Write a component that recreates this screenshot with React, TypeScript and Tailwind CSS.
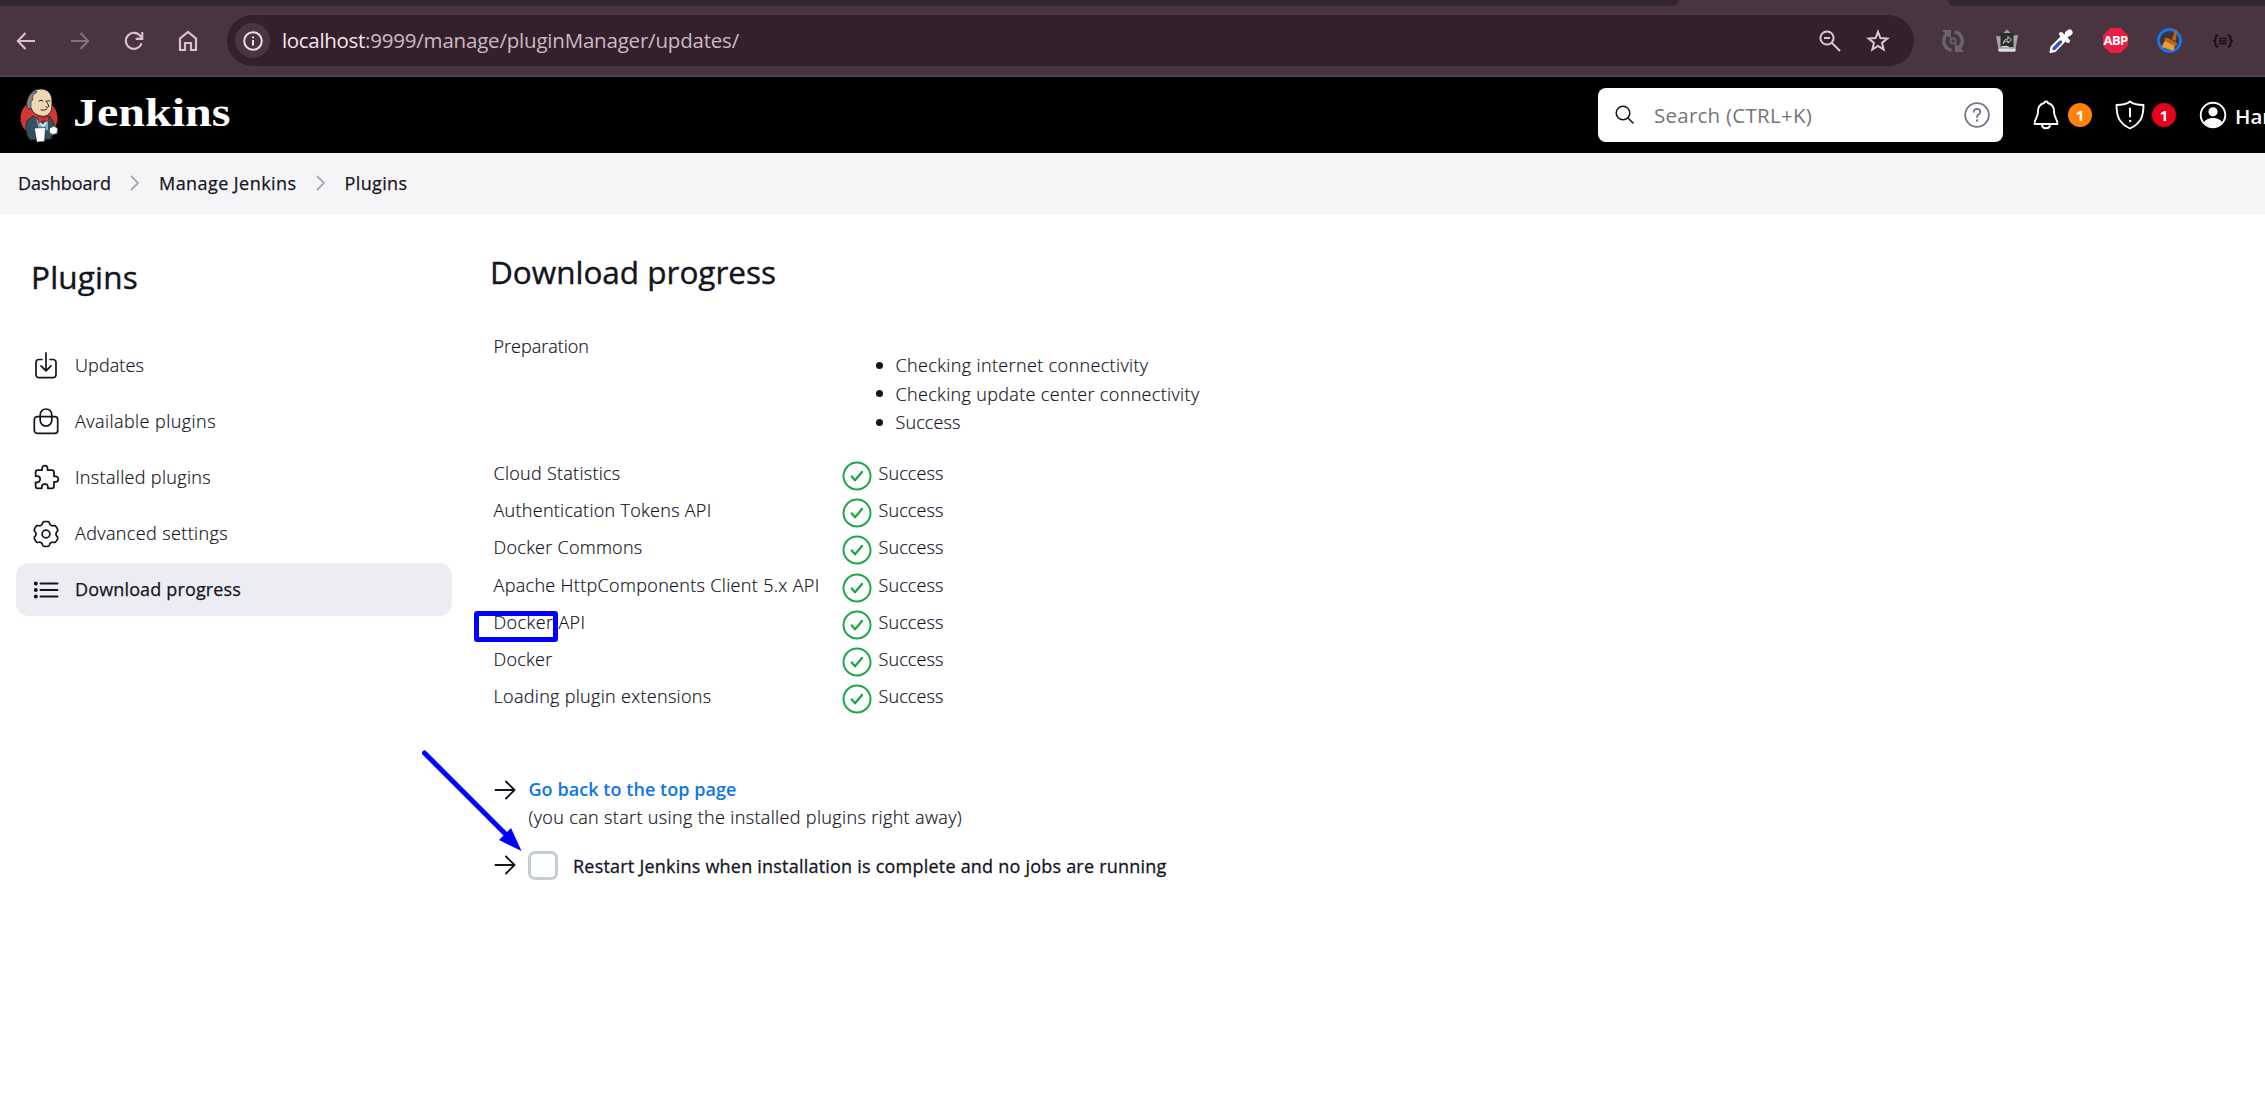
import { useLayoutEffect, useRef, useState, type ReactNode } from "react";
import { IoExtensionPuzzleOutline } from "react-icons/io5";

/* Text line whose tracking is computed so that it spans a given width. */
function Fit({ w, children, className = "" }: { w: number; children: string; className?: string }) {
  const ref = useRef<HTMLSpanElement>(null);
  const [spacing, setSpacing] = useState(0);
  useLayoutEffect(() => {
    const el = ref.current;
    if (!el) return;
    el.style.letterSpacing = "0px";
    const natural = el.getBoundingClientRect().width;
    const next = (w - natural) / children.length;
    el.style.letterSpacing = `${next}px`;
    setSpacing(next);
  }, [w, children]);
  return (
    <span ref={ref} className={`inline-block whitespace-nowrap ${className}`} style={{ letterSpacing: spacing }}>
      {children}
    </span>
  );
}

function Svg({ children, className, box = "0 0 24 24" }: { children: ReactNode; className: string; box?: string }) {
  return (
    <svg viewBox={box} className={`shrink-0 ${className}`} fill="none" stroke="currentColor" strokeLinecap="round" strokeLinejoin="round">
      {children}
    </svg>
  );
}

const gearPath = (() => {
  const pts: string[] = [];
  for (let i = 0; i < 180; i++) {
    const a = (i / 180) * Math.PI * 2;
    const c = Math.cos(6 * a);
    const r = 11.2 + 1.3 * Math.tanh(2.2 * (c + 0.35));
    pts.push(`${(14 + r * Math.sin(a)).toFixed(2)} ${(14 - r * Math.cos(a)).toFixed(2)}`);
  }
  return `M${pts.join("L")}Z`;
})();

function Toolbar() {
  return (
    <div className="h-[77px] bg-[#493540] border-b-2 border-[#52414b]">
      <div className="h-[6px] flex justify-between">
        <div className="w-[1679px] bg-[#33262f] rounded-br-[8px]" />
        <div className="w-[317px] bg-[#33262f] rounded-bl-[8px]" />
      </div>
      <div className="flex items-center h-[69px] text-[#dcbfd2]">
        <Svg className="w-[20px] h-[20px] ml-4" box="0 0 20 20">
          <path d="M19 10H2M9.5 2 1.8 10l7.700 8" strokeWidth="2.100" strokeLinecap="butt" strokeLinejoin="miter" />
        </Svg>
        <Svg className="w-[20px] h-[20px] ml-[34px] text-[#86707c]" box="0 0 20 20">
          <path d="M1 10h17M10.500 2l7.700 8-7.700 8" strokeWidth="2.100" strokeLinecap="butt" strokeLinejoin="miter" />
        </Svg>
        <Svg className="w-[20px] h-[20px] ml-[34px]" box="0 0 20 20">
          <path d="M17.500 12.200A8 8 0 1 1 16.400 5.200L18 7.500M18.300 1v6.900h-6.600" strokeWidth="2.100" strokeLinecap="butt" strokeLinejoin="miter" />
        </Svg>
        <Svg className="w-[20px] h-[22px] ml-[34px]" box="0 0 20 22">
          <path d="M2 8.500 10 2l8 6.500V20h-5v-7H7v7H2z" strokeWidth="2.200" strokeLinejoin="miter" />
        </Svg>
        <div className="ml-[29px] w-[1687px] h-[51px] rounded-full bg-[#33202b] flex items-center">
          <div className="ml-2 size-[35px] rounded-full bg-[#493540] flex items-center justify-center text-[#eadde4]">
            <Svg className="size-[20px]" box="0 0 20 20">
              <circle cx="10" cy="10" r="8.800" strokeWidth="2" />
              <path d="M10 9v5.500M10 5.500v1.800" strokeWidth="2" strokeLinecap="butt" />
            </Svg>
          </div>
          <div className="ml-[12px] mb-[2px] text-[20.500px] leading-[28px] text-[#cbb9c4] flex">
            <Fit w={83} className="text-[#f3e6ee]">localhost</Fit>
            <Fit w={374}>:9999/manage/pluginManager/updates/</Fit>
          </div>
          <Svg className="size-[22px] ml-auto mr-[25px] text-[#d8c6d0]" box="0 0 22 22">
            <circle cx="8" cy="8" r="6.600" strokeWidth="2" />
            <path d="M13 13l8 8M5 8h6" strokeWidth="2" strokeLinecap="butt" />
          </Svg>
          <Svg className="size-[24px] mr-[24px] text-[#d8c6d0]">
            <path d="M12 2.800l2.400 6.300 6.900.4-5.300 4.400 1.700 6.700L12 16.900l-5.700 3.700L8 13.900 2.700 9.500l6.900-.4z" strokeWidth="2" strokeLinejoin="miter" />
          </Svg>
        </div>
        <Svg className="size-[24px] ml-[27px] text-[#6a6467]">
          <path d="M10.500 21.200A9.300 9.300 0 0 1 6 5M13.500 2.800A9.300 9.300 0 0 1 18 19" strokeWidth="3.400" strokeLinecap="butt" />
          <path d="M1 1h9v9L7.200 7.200 5 5.500zM23 23h-9v-9l2.800 2.800L19 18.500z" fill="currentColor" stroke="none" />
          <circle cx="12" cy="12" r="2.600" strokeWidth="1.600" />
        </Svg>
        <Svg className="size-[24px] ml-[30px]">
          <path d="M1 7l6 .5L8.500 4 12 .5 15.500 4l1 3L23 6l-3 17H4z" fill="#a5a5a5" stroke="none" />
          <path d="M5.500 4h13v14h-13z" fill="#2b2d2f" stroke="none" />
          <path d="M7 17.500h6" stroke="#dedede" strokeWidth="1.200" />
          <path d="M4.500 21h15" stroke="#dedede" strokeWidth="2.500" />
          <path d="M8.500 14c.2-3 2-4 4.500-4V7.500l3.500 3.500-3.500 3v-2c-2 0-3.500.5-4.500 2z" stroke="#c9c9c9" strokeWidth="1" />
        </Svg>
        <Svg className="size-[24px] ml-[30px]">
          <path d="M1.500 23l1-5L13 7.500l3.500 3.500L6 22z" fill="#fff" stroke="#fff" strokeWidth="2" />
          <path d="M5 19.500l6.500-6.500" stroke="#3950c4" strokeWidth="3.400" />
          <path d="M12 5l7 7M15.500 8.500 20 4" stroke="#fff" strokeWidth="4" />
          <path d="M19 4.500l1.500-1" stroke="#fff" strokeWidth="6" />
        </Svg>
        <div className="relative ml-[30px] size-[25px] flex items-center justify-center">
          <Svg className="size-[25px]" box="0 0 25 25">
            <path d="M7.300 0h10.400L25 7.300v10.400L17.700 25H7.300L0 17.700V7.300z" fill="#ed1e45" stroke="none" />
          </Svg>
          <span className="absolute font-['Open_Sans'] font-bold text-[13px] tracking-[-0.7px] leading-none text-white">ABP</span>
        </div>
        <Svg className="size-[25px] ml-[29px]" box="0 0 25 25">
          <circle cx="12.500" cy="12.500" r="11" fill="#3a3438" stroke="#1a73e8" strokeWidth="2.800" />
          <path d="M18.500 2.500 15.500 11l3 1.500 1-9.500z" fill="#b5651d" stroke="#b5651d" />
          <path d="M8 12.500l10 4.500-1.500 6-12-4z" fill="#eb9a3b" stroke="none" />
          <path d="M9.500 11.500l8.500 4.500" stroke="#b5651d" strokeWidth="4" />
        </Svg>
        <Svg className="w-[20px] h-[14px] ml-[31px] text-[#161014]" box="0 0 20 14">
          <path d="M4.500 1.500Q2.500 1.500 2.500 4T1 7q1.500.3 1.500 3t2 2.500M15.500 1.500q2 0 2 2.500T19 7q-1.500.3-1.500 3t-2 2.500" strokeWidth="1.800" />
          <path d="M6 4.500h8M6 7h8M6 9.500h8" strokeWidth="1.300" strokeLinecap="butt" />
        </Svg>
      </div>
    </div>
  );
}

function Mascot() {
  return (
    <Svg className="w-[40px] h-[55px]" box="0 0 40 55">
      <circle cx="20" cy="30" r="18.500" fill="#d33833" stroke="none" />
      <path d="M8 33l6-5 8 5 8-5 5 7 0 7-3 9-21 1-3-5-1-7z" fill="#335061" stroke="#1b2a33" />
      <path d="M17 30l6 7 6-6 0 11h-9z" fill="#81b0c4" stroke="none" />
      <path d="M21 35l3 3 3-3" stroke="#eef2f4" strokeWidth="1.500" />
      <path d="M9 20C6 17 8 14 9 11 11 4 16 1 22 1c7 0 11 5 11 12 0 6 0 10-3 13-4 4-11 2-15-1-2-2-2-4-3-5z" fill="#f0d6b7" stroke="#231f20" strokeWidth=".9" />
      <path d="M9 21C6 15 9 5 17 3c1 0 2 1 0 2-3 1-4 4-3 7l-2 1v7z" fill="#85868a" stroke="#231f20" strokeWidth=".6" />
      <path d="M20 13q2-2 4 0M28 13q2-1 3 0M27 13q2 3 3 5-1 2-3 1M22 22q4 1 6-1" stroke="#231f20" strokeWidth="1" />
      <path d="M19 28l5 2.500 5-2.500 1 6-5-2-5 3z" fill="#d33833" stroke="#8b1c1a" strokeWidth=".7" />
      <path d="M31 40l4-2 3.500 2.500-.5 5-4.500 1-3-2z" fill="#fff" stroke="#55606a" strokeWidth=".8" />
      <path d="M15.500 40l11-.5-1 14-7.500.5z" fill="#fff" stroke="#3a3a3a" strokeWidth=".7" />
    </Svg>
  );
}

function Header() {
  return (
    <header className="h-[76px] bg-black flex items-center text-white overflow-hidden">
      <div className="ml-[19px]">
        <Mascot />
      </div>
      <div className="ml-[14px] mb-[4px] w-[158px] h-[46px] shrink-0">
        <span className="inline-block origin-left scale-x-[1.215] font-['Liberation_Serif'] font-bold text-[39.500px] leading-[46px]">Jenkins</span>
      </div>
      <div className="ml-[1367px] w-[405px] h-[54px] shrink-0 rounded-lg bg-white flex items-center">
        <Svg className="size-[20px] ml-[17px] text-[#14141f]" box="0 0 20 20">
          <circle cx="8" cy="8" r="6.800" strokeWidth="1.500" />
          <path d="M13 13l5 5" strokeWidth="1.600" />
        </Svg>
        <Fit w={158} className="ml-[19px] text-[20.500px] leading-[28px] text-[#757575]">Search (CTRL+K)</Fit>
        <Svg className="size-[26px] ml-auto mr-[13px] text-[#737389] -mt-px" box="0 0 26 26">
          <circle cx="13" cy="13" r="11.800" strokeWidth="1.800" />
          <path d="M9.800 9.800c.2-4 6.800-3.800 6.500.2-.2 2.200-3.200 2.500-3.300 5.200" strokeWidth="1.800" />
          <circle cx="13" cy="18.500" r=".6" strokeWidth="1.200" fill="currentColor" />
        </Svg>
      </div>
      <Svg className="w-[26px] h-[30px] ml-[30px] shrink-0" box="0 0 26 30">
        <path d="M13 1.500c1.500 0 1.800 1 1.800 1.500 4.500 1 6.200 4.500 6.200 8.500 0 6 3.500 7.500 3.500 12.500H1.500C1.500 19 5 17.500 5 11.500 5 7.500 6.700 4 11.200 3c0-.5.300-1.500 1.800-1.500zM9 24.500c0 5 8 5 8 0" strokeWidth="1.900" />
      </Svg>
      <span className="ml-[9px] size-6 shrink-0 rounded-full bg-[#ff820a] flex items-center justify-center text-[15px] font-bold">1</span>
      <Svg className="w-[30px] h-[30px] ml-[23px]" box="0 0 30 30">
        <path d="M15 1.500c3 2.500 8 3.500 13.500 3.500C28.500 17 25.500 23.500 15 28.500 4.500 23.500 1.500 17 1.500 5 7 5 12 4 15 1.500z" strokeWidth="1.900" />
        <path d="M15 8.500l.1 8" strokeWidth="2" />
        <circle cx="15" cy="21" r=".8" fill="currentColor" strokeWidth="1" />
      </Svg>
      <span className="ml-[7px] size-6 shrink-0 rounded-full bg-[#e6001f] flex items-center justify-center text-[15px] font-bold">1</span>
      <Svg className="size-[28px] ml-[23px]" box="0 0 28 28">
        <circle cx="14" cy="14" r="12.300" strokeWidth="1.900" />
        <circle cx="14" cy="10.800" r="4.600" fill="currentColor" stroke="none" />
        <path d="M5 21.500c2-6 16-6 18 0-4 6.500-14 6.500-18 0z" fill="currentColor" stroke="none" />
      </Svg>
      <span className="ml-[8px] mt-px text-[20.500px] font-semibold leading-[28px]">Har</span>
    </header>
  );
}

function Chevron() {
  return (
    <Svg className="w-[10px] h-[16px] mx-[19px] text-[#a9a9c0]" box="0 0 10 16">
      <path d="M1.500 1.500 8 8l-6.500 6.500" strokeWidth="1.900" />
    </Svg>
  );
}

function Breadcrumbs() {
  return (
    <nav className="h-[61px] bg-[#f5f5f8] flex items-center pl-[18px] pb-[2px] text-[18px] leading-[28px] [-webkit-text-stroke:0.25px]">
      <Fit w={93}>Dashboard</Fit>
      <Chevron />
      <Fit w={137.5}>Manage Jenkins</Fit>
      <Chevron />
      <Fit w={63}>Plugins</Fit>
    </nav>
  );
}

const items: { label: string; w: number; icon: ReactNode; active?: boolean }[] = [
  {
    label: "Updates",
    w: 69,
    icon: (
      <Svg className="size-[28px]" box="0 0 28 28">
        <path d="M10 7.500H7A3 3 0 0 0 4 10.500v12.200a3 3 0 0 0 3 3h14a3 3 0 0 0 3-3V10.500a3 3 0 0 0-3-3H18M14 .900v17.500M9 13.800l5 5 5-5" strokeWidth="1.700" />
      </Svg>
    ),
  },
  {
    label: "Available plugins",
    w: 141,
    icon: (
      <Svg className="size-[28px]" box="0 0 28 28">
        <rect x="2.300" y="8.700" width="23.400" height="16.700" rx="3" strokeWidth="1.700" />
        <path d="M8.200 8.300V6.800a5.800 5.800 0 0 1 11.600 0V12.300a5.800 5.800 0 0 1-11.600 0z" strokeWidth="1.700" />
      </Svg>
    ),
  },
  { label: "Installed plugins", w: 136, icon: <IoExtensionPuzzleOutline className="size-[28px] relative left-px -top-px" /> },
  {
    label: "Advanced settings",
    w: 153,
    icon: (
      <Svg className="size-[28px]" box="0 0 28 28">
        <path d={gearPath} strokeWidth="1.700" />
        <circle cx="14" cy="14" r="3.900" strokeWidth="1.700" />
      </Svg>
    ),
  },
  {
    label: "Download progress",
    w: 166,
    active: true,
    icon: (
      <Svg className="size-[28px]" box="0 0 28 28">
        <path d="M8.500 7.500h17M8.500 14h17M8.500 20.500h17" strokeWidth="1.900" />
        <path d="M3.800 7.500h.01M3.800 14h.01M3.800 20.500h.01" strokeWidth="4" />
      </Svg>
    ),
  },
];

function Sidebar() {
  return (
    <aside className="w-[436px] ml-4 shrink-0">
      <h1 className="mt-[41px] ml-[15px] text-[31.500px] leading-[44px] [-webkit-text-stroke:0.4px]">
        <Fit w={107}>Plugins</Fit>
      </h1>
      <div className="mt-[40px] flex flex-col gap-[3px]">
        {items.map((it) => (
          <div key={it.label} className={it.active ? "h-[53px] rounded-[13px] bg-[#ecedf2] flex items-center pl-4" : "h-[53px] flex items-center pl-4"}>
            {it.icon}
            <Fit w={it.w} className={it.active ? "ml-[15px] mb-[2px] [-webkit-text-stroke:0.25px]" : "ml-[15px] mb-[2px] font-light [-webkit-text-stroke:0.2px]"}>
              {it.label}
            </Fit>
          </div>
        ))}
      </div>
    </aside>
  );
}

const plugins: [string, number][] = [
  ["Cloud Statistics", 127],
  ["Authentication Tokens API", 218],
  ["Docker Commons", 149],
  ["Apache HttpComponents Client 5.x API", 326],
  ["Docker API", 92],
  ["Docker", 59],
  ["Loading plugin extensions", 218],
];

const checks: [string, number][] = [
  ["Checking internet connectivity", 253],
  ["Checking update center connectivity", 304],
  ["Success", 65],
];

function ArrowRight() {
  return (
    <Svg className="w-[22px] h-[20px]" box="0 0 22 20">
      <path d="M1.500 10h18.500M12 1.500 20.500 10 12 18.500" strokeWidth="1.900" />
    </Svg>
  );
}

function Progress() {
  return (
    <main className="relative ml-[38px] w-[900px]">
      <h1 className="mt-[36px] text-[31.500px] leading-[44px] [-webkit-text-stroke:0.4px]">
        <Fit w={286}>Download progress</Fit>
      </h1>
      <div className="ml-[3.500px] mt-[38px] flex font-light [-webkit-text-stroke:0.2px]">
        <Fit w={97} className="w-[97px]">Preparation</Fit>
        <ul className="ml-[285px] mt-[19px]">
          {checks.map(([t, w]) => (
            <li key={t} className="flex items-center h-[28.500px]">
              <span className="size-[7px] rounded-full bg-[#14141f] mr-[13px]" />
              <Fit w={w}>{t}</Fit>
            </li>
          ))}
        </ul>
      </div>
      <div className="ml-[3.500px] mt-[22.500px] font-light [-webkit-text-stroke:0.2px]">
        {plugins.map(([name, w]) => (
          <div key={name} className="flex h-[37.200px]">
            <div className="w-[348.500px]">
              <Fit w={w}>{name}</Fit>
            </div>
            <Svg className="size-[30px] mt-[2px] text-[#1ea64b]" box="0 0 30 30">
              <circle cx="15" cy="15" r="13.500" strokeWidth="2" />
              <path d="M9.800 15.500l3.200 3.800 7-8.300" strokeWidth="2.300" />
            </Svg>
            <Fit w={65} className="ml-[6.500px]">Success</Fit>
          </div>
        ))}
      </div>
      <div className="ml-[3.500px] mt-[55.500px] flex">
        <div className="mt-[5px]">
          <ArrowRight />
        </div>
        <div className="ml-[13px] flex flex-col items-start">
          <Fit w={208} className="font-semibold text-[#0b76e8]">Go back to the top page</Fit>
          <Fit w={433.5} className="font-light [-webkit-text-stroke:0.2px]">(you can start using the installed plugins right away)</Fit>
        </div>
      </div>
      <div className="ml-[3.500px] mt-[20px] flex items-center">
        <ArrowRight />
        <span className="ml-[12.500px] w-[30px] h-[29px] rounded-[7px] border-[3px] border-[#c3cdd3]" />
        <Fit w={593.5} className="ml-[15px] mt-px [-webkit-text-stroke:0.3px]">Restart Jenkins when installation is complete and no jobs are running</Fit>
      </div>
      {/* Annotations drawn over the page */}
      <div className="absolute left-[-16px] top-[397px] w-[84px] h-[31px] rounded-[3px] border-[5px] border-[#0000ff]" />
      <Svg className="absolute left-[-70px] top-[532px] w-[105px] h-[108px] text-[#0000ff]" box="0 0 105 108">
        <path d="M4.500 7l88 88" strokeWidth="5" />
        <path d="M101.500 105 79 94 91 82z" fill="currentColor" stroke="none" />
      </Svg>
    </main>
  );
}

export default function App() {
  return (
    <div className="w-[2265px] h-[1117px] overflow-hidden bg-white text-[#14141f] font-['Open_Sans',sans-serif] text-[18px] leading-[28px]">
      <Toolbar />
      <Header />
      <Breadcrumbs />
      <div className="flex">
        <Sidebar />
        <Progress />
      </div>
    </div>
  );
}
